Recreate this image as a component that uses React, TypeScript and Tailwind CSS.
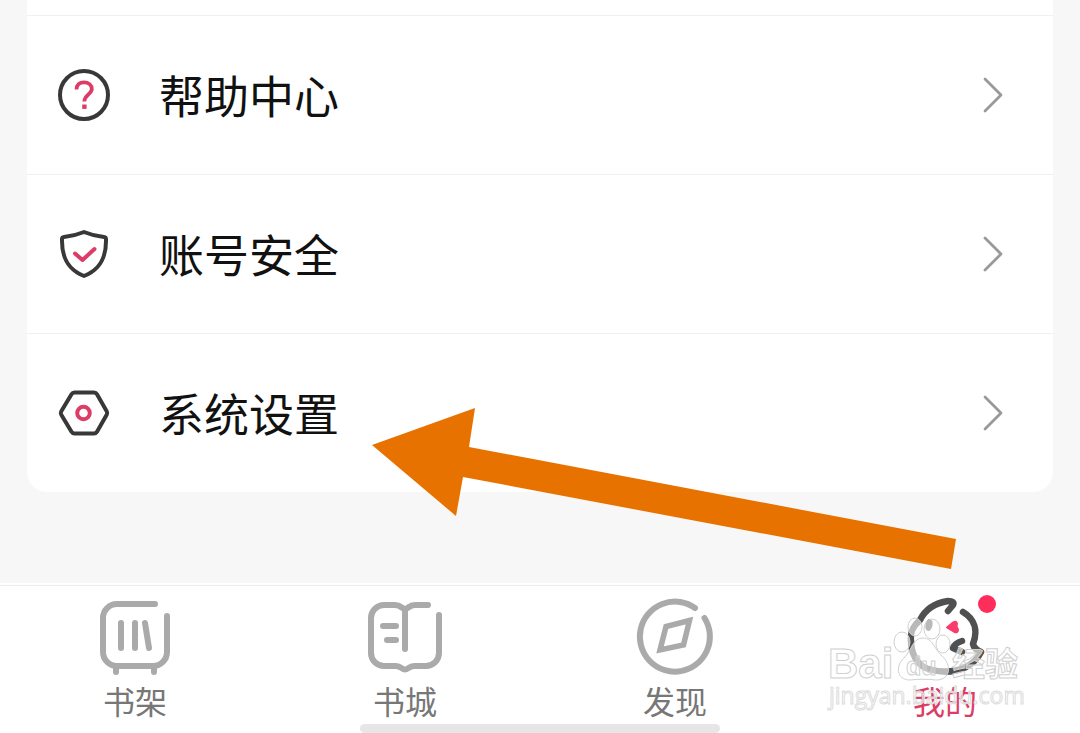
import type { ReactNode } from "react";

interface MenuRow {
  label: string;
  icon: ReactNode;
}

interface Tab {
  label: string;
  icon: ReactNode;
  active?: boolean;
}

function HelpIcon() {
  return (
    <svg viewBox="0 0 54 54" className="size-[54px]" fill="none">
      <circle cx="27" cy="27" r="24" stroke="#383838" strokeWidth="4" />
      <path
        d="M19.5 21.5C19.5 17 22.5 14.3 27 14.3S34.8 17 34.8 21C34.8 26 27.3 27 27.3 33.5"
        stroke="#dd3c66"
        strokeWidth="3.8"
      />
      <path d="M25.2 36.5h4.4v4.4h-4.4z" fill="#dd3c66" />
    </svg>
  );
}

function ShieldIcon() {
  return (
    <svg viewBox="0 0 54 54" className="size-[54px]" fill="none" strokeLinecap="round" strokeLinejoin="round">
      <path
        d="M27 5C33 7.500 40 9.300 47 10Q49 10.200 49 12C49.500 32 42 43 27 49C12 43 4.500 32 5 12Q5 10.200 7 10C14 9.300 21 7.500 27 5Z"
        stroke="#383838"
        strokeWidth="4"
      />
      <path d="M18 26.500L25.500 33L37.500 22" stroke="#dd3c66" strokeWidth="4" />
    </svg>
  );
}

function SettingsIcon() {
  return (
    <svg viewBox="0 0 54 54" className="size-[54px]" fill="none">
      <path
        d="M17.500 6.500H37Q39 6.500 40 8.200L49.700 25.200Q50.700 27 49.700 28.800L40 45.800Q39 47.500 37 47.500H17.500Q15.500 47.500 14.500 45.800L4.300 28.800Q3.300 27 4.300 25.200L14.500 8.200Q15.500 6.500 17.500 6.500Z"
        stroke="#383838"
        strokeWidth="4"
      />
      <circle cx="26.500" cy="27" r="6.300" stroke="#dd3c66" strokeWidth="4" />
    </svg>
  );
}

function ChevronIcon() {
  return (
    <svg viewBox="0 0 22 38" className="h-[38px] w-[22px]" fill="none">
      <path
        d="M3 3L19 19L3 35"
        stroke="#999999"
        strokeWidth="2.8"
        strokeLinecap="round"
        strokeLinejoin="round"
      />
    </svg>
  );
}

function ShelfIcon() {
  return (
    <svg viewBox="0 0 80 80" className="size-20" fill="none" stroke="#aaaaaa" strokeWidth="6" strokeLinecap="round">
      <path d="M60 7H22A14 14 0 0 0 8 21V55A14 14 0 0 0 22 69H58A14 14 0 0 0 72 55V19" />
      <path d="M26 26V51M40 26V51M50 26L54 51" />
      <path d="M21 70V75M59 70V75" />
    </svg>
  );
}

function BookIcon() {
  return (
    <svg viewBox="0 0 80 80" className="size-20" fill="none" stroke="#aaaaaa" strokeWidth="6" strokeLinecap="round">
      <path d="M63 8H50C44 8 43 12 40 12C37 12 36 8 30 8H19A13 13 0 0 0 6 21V56A13 13 0 0 0 19 69H31C36 69 37 72.500 40 72.500C43 72.500 44 69 49 69H61A13 13 0 0 0 74 56V18" />
      <path d="M40 12V52" />
      <path d="M18 29H31M22 43H31" />
    </svg>
  );
}

function CompassIcon() {
  return (
    <svg viewBox="0 0 80 80" className="size-20" fill="none" stroke="#aaaaaa" strokeLinecap="round">
      <path d="M60 11A35 35 0 1 0 69.500 21" strokeWidth="6" />
      <path d="M54.500 23.500L31 29.500L25 53L48.500 48Z" strokeWidth="5.500" />
    </svg>
  );
}

function MascotIcon() {
  return (
    <svg viewBox="0 0 80 80" className="size-20" fill="none" stroke="#505050" strokeWidth="6.500" strokeLinecap="round" strokeLinejoin="round">
      <path d="M43 14L48 8Q50 4 43 4C30 6 20 13 15 23C7 30 5 36 6 44C6 56 12 68 22 71.500C36 76 50 75 60 70.500Q71 65 76 55Q69 52 68 47C73 34 70 22 58 15" />
      <path d="M57 44Q50 46 48 51L57 55" />
      <ellipse cx="24" cy="28" rx="3.500" ry="6" fill="#505050" stroke="none" transform="rotate(12 24 28)" />
      <path
        d="M42 30.500L48 25.500Q51 23.500 52 26.500L51.500 29.500L53 32.500Q53 36 49.500 35Z"
        fill="#fb3c6a"
        stroke="#fb3c6a"
        strokeWidth="2"
      />
    </svg>
  );
}

function Arrow() {
  return (
    <svg viewBox="0 0 586 162" className="pointer-events-none absolute top-[408px] left-[371px] h-[162px] w-[586px]">
      <path d="M1 37L104 0L98 39L585 131L580 161L92 69L85 108Z" fill="#e87200" />
    </svg>
  );
}

function Watermark() {
  return (
    <svg
      viewBox="0 0 200 100"
      className="pointer-events-none absolute right-[55px] bottom-[20px] h-[100px] w-[200px]"
      fill="#ffffff"
      fillOpacity="0.6"
      stroke="#d0d0d0"
      strokeWidth="1"
    >
      <text x="3" y="65" fontSize="42" fontWeight="700" fontFamily="Liberation Sans, sans-serif">
        Bai
      </text>
      <ellipse cx="77" cy="29" rx="8" ry="10" />
      <ellipse cx="90" cy="14" rx="7" ry="9" />
      <ellipse cx="107" cy="16" rx="8" ry="10" />
      <ellipse cx="118" cy="31" rx="7" ry="9" />
      <path d="M98 25C88 25 87 36 80 44C70 52 71 67 85 67C93 66 103 66 111 67C126 67 127 52 117 43C109 36 108 25 98 25Z" />
      <text x="81" y="62" fontSize="25" fontWeight="700" fontFamily="Liberation Sans, sans-serif" fillOpacity="0.2">
        du
      </text>
      <text x="127" y="63" fontSize="33" fontWeight="700" fontFamily="Noto Sans CJK SC, sans-serif">
        经验
      </text>
      <text x="4" y="91" fontSize="23" fontFamily="Open Sans, sans-serif" stroke="#dcdcdc">
        jingyan.baidu.com
      </text>
    </svg>
  );
}

const rows: MenuRow[] = [
  { label: "帮助中心", icon: <HelpIcon /> },
  { label: "账号安全", icon: <ShieldIcon /> },
  { label: "系统设置", icon: <SettingsIcon /> },
];

const tabs: Tab[] = [
  { label: "书架", icon: <ShelfIcon /> },
  { label: "书城", icon: <BookIcon /> },
  { label: "发现", icon: <CompassIcon /> },
  { label: "我的", icon: <MascotIcon />, active: true },
];

export default function App() {
  return (
    <div className="relative flex min-h-screen flex-col bg-[#f7f7f7] font-['Noto_Sans_CJK_SC',sans-serif]">
      <main className="flex-1 px-[27px]">
        <div className="rounded-b-[20px] bg-white pt-[15px]">
          {rows.map((row) => (
            <button
              key={row.label}
              type="button"
              className="flex h-[159px] w-full items-center border-t border-[#f0f0f0] pr-[49px] pl-[30px] text-left"
            >
              {row.icon}
              <span className="ml-12 flex-1 text-[45px] leading-[64px] text-[#111111]">
                {row.label}
              </span>
              <ChevronIcon />
            </button>
          ))}
        </div>
      </main>

      <nav className="relative bg-white pt-[2px]">
        <div className="grid grid-cols-4 border-t border-[#ececec] pt-[11px]">
          {tabs.map((tab) => (
            <a
              key={tab.label}
              href="#"
              className={`flex flex-col items-center ${
                tab.active ? "text-[#dd3c66]" : "text-[#777777]"
              }`}
            >
              <span className="relative">
                {tab.icon}
                {/* Unread dot */}
                {tab.active && (
                  <span className="absolute -top-[2px] -right-[11px] size-[18px] rounded-full bg-[#ff2d5c]" />
                )}
              </span>
              <span className="mt-[7px] text-[32px] leading-8">{tab.label}</span>
            </a>
          ))}
        </div>
        {/* Home indicator */}
        <div className="mx-auto mt-2 h-[9px] w-1/3 rounded-full bg-[#e6e6e6]" />
        <Watermark />
      </nav>

      <Arrow />
    </div>
  );
}
